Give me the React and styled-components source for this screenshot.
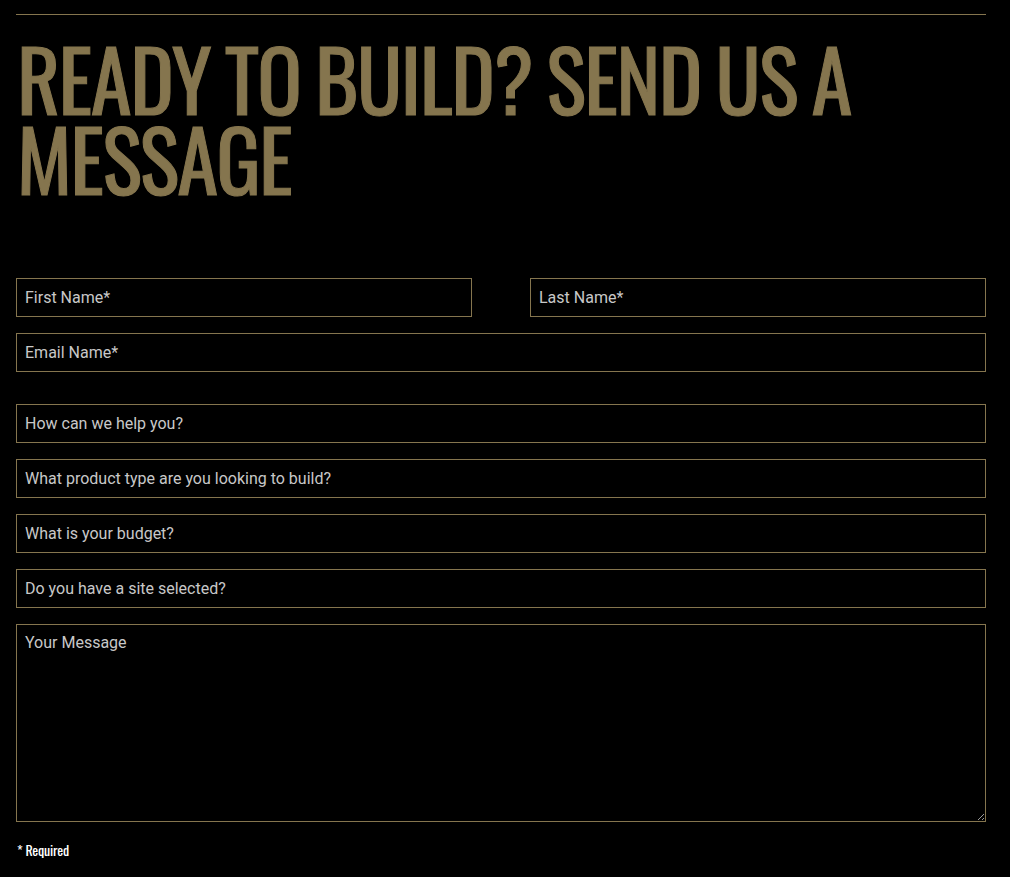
import React from 'react';
import styled, { createGlobalStyle } from 'styled-components';

const gold = '#85754e';

const Global = createGlobalStyle`
  body {
    margin: 0;
    background: #000;
    font-family: Roboto, "Liberation Sans", sans-serif;
  }
`;

const Page = styled.section`
  padding: 14px 24px 20px 16px;
`;

const Rule = styled.hr`
  margin: 0;
  border: 0;
  border-top: 1px solid ${gold};
`;

const Heading = styled.h2`
  margin: 23px 0 0 1px;
  font-family: Oswald, "Roboto Condensed", sans-serif;
  font-weight: 450;
  font-size: 83px;
  line-height: 80px;
  letter-spacing: -1.5px;
  word-spacing: -3px;
  text-transform: uppercase;
  color: ${gold};
  -webkit-text-stroke: 1px ${gold};
`;

const Form = styled.form`
  margin-top: 80px;
  display: flex;
  flex-direction: column;
  gap: 16px;
`;

const Row = styled.div`
  display: grid;
  grid-template-columns: 1fr 1fr;
  column-gap: 58px;
`;

const Field = styled.input`
  box-sizing: border-box;
  width: 100%;
  height: 39px;
  margin: ${p => (p.$spaced ? '16px 0 0' : '0')};
  padding: 0 8px;
  border: 1px solid ${gold};
  border-radius: 0;
  background: #000;
  color: #ddd;
  font-family: Roboto, "Liberation Sans", sans-serif;
  font-size: 16px;
  outline: none;
  &::placeholder {
    color: #c8c8c8;
    opacity: 1;
  }
`;

const Message = styled.textarea`
  box-sizing: border-box;
  width: 100%;
  height: 198px;
  margin: 0;
  padding: 7px 8px;
  border: 1px solid ${gold};
  border-radius: 0;
  background: #000;
  color: #ddd;
  font-family: Roboto, "Liberation Sans", sans-serif;
  font-size: 16px;
  line-height: 21px;
  outline: none;
  display: block;
  &::placeholder {
    color: #c8c8c8;
    opacity: 1;
  }
`;

const Note = styled.p`
  margin: 17px 0 0 1px;
  font-family: Oswald, "Roboto Condensed", sans-serif;
  font-weight: 400;
  font-size: 14px;
  letter-spacing: -0.2px;
  color: #fff;
`;

export default function App() {
  return (
    <Page>
      <Global />
      <Rule />
      <Heading>Ready to build? Send us a message</Heading>
      <Form onSubmit={e => e.preventDefault()}>
        <Row>
          <Field placeholder="First Name*" />
          <Field placeholder="Last Name*" />
        </Row>
        <Field placeholder="Email Name*" />
        <Field $spaced placeholder="How can we help you?" />
        <Field placeholder="What product type are you looking to build?" />
        <Field placeholder="What is your budget?" />
        <Field placeholder="Do you have a site selected?" />
        <Message placeholder="Your Message" />
      </Form>
      <Note>* Required</Note>
    </Page>
  );
}
